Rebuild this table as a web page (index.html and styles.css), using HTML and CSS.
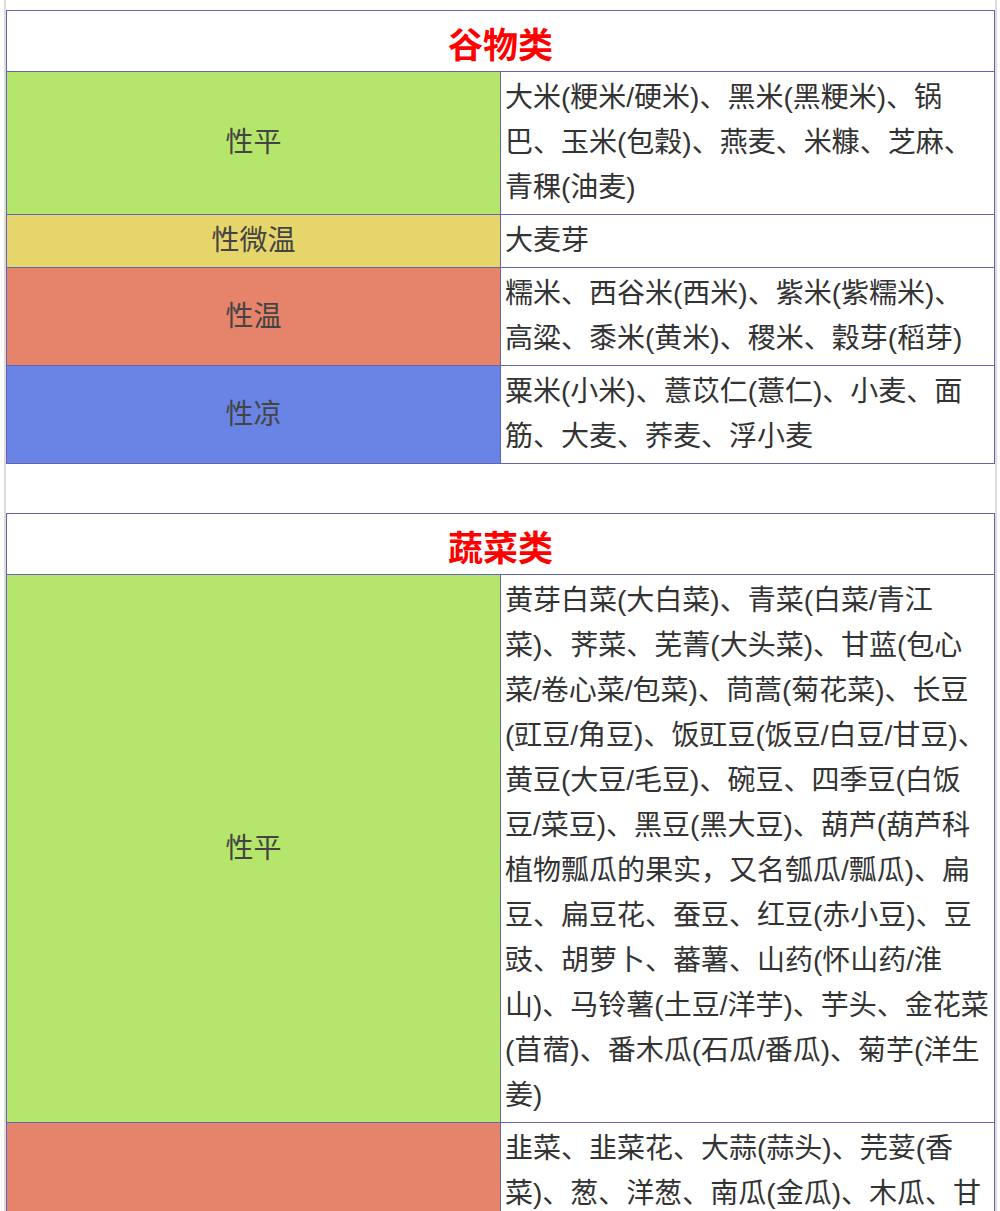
FILE: index.html
```html
<!DOCTYPE html>
<html lang="zh-CN">
<head>
<meta charset="utf-8">
<title>食物性味表</title>
<link rel="stylesheet" href="styles.css">
</head>
<body>
<div class="page">
  <table class="food-table">
    <tr><th colspan="2" class="cat">谷物类</th></tr>
    <tr><td class="nat green">性平</td><td class="items">大米(粳米/硬米)、黑米(黑粳米)、锅巴、玉米(包穀)、燕麦、米糠、芝麻、青稞(油麦)</td></tr>
    <tr><td class="nat yellow">性微温</td><td class="items">大麦芽</td></tr>
    <tr><td class="nat red">性温</td><td class="items">糯米、西谷米(西米)、紫米(紫糯米)、高粱、黍米(黄米)、稷米、穀芽(稻芽)</td></tr>
    <tr><td class="nat blue">性凉</td><td class="items">粟米(小米)、薏苡仁(薏仁)、小麦、面筋、大麦、荞麦、浮小麦</td></tr>
  </table>

  <table class="food-table">
    <tr><th colspan="2" class="cat">蔬菜类</th></tr>
    <tr><td class="nat green">性平</td><td class="items">黄芽白菜(大白菜)、青菜(白菜/青江菜)、荠菜、芜菁(大头菜)、甘蓝(包心菜/卷心菜/包菜)、茼蒿(菊花菜)、长豆(豇豆/角豆)、饭豇豆(饭豆/白豆/甘豆)、黄豆(大豆/毛豆)、碗豆、四季豆(白饭豆/菜豆)、黑豆(黑大豆)、葫芦(葫芦科植物瓢瓜的果实，又名瓠瓜/瓢瓜)、扁豆、扁豆花、蚕豆、红豆(赤小豆)、豆豉、胡萝卜、蕃薯、山药(怀山药/淮山)、马铃薯(土豆/洋芋)、芋头、金花菜(苜蓿)、番木瓜(石瓜/番瓜)、菊芋(洋生姜)</td></tr>
    <tr><td class="nat red">性温</td><td class="items">韭菜、韭菜花、大蒜(蒜头)、芫荽(香菜)、葱、洋葱、南瓜(金瓜)、木瓜、甘蔗、生姜、辣椒、芥菜、香椿、茴香、刀豆、韭黄、蒜苗、蒜苔、芥蓝、雪里蕻(雪菜)、紫苏叶、辣椒叶、薤白、洋芫荽</td></tr>
  </table>
</div>
</body>
</html>
```

FILE: styles.css
```css
html, body {
  margin: 0;
  padding: 0;
  background: #ffffff;
}

body {
  font-family: "Liberation Sans", "Noto Sans CJK SC", sans-serif;
}

.page {
  margin-left: 4px;
  width: 989px;
  border-left: 2px solid #dcdcd8;
  border-right: 2px solid #dcdcd8;
  padding-top: 10px;
  min-height: 1300px;
  box-sizing: content-box;
}

.food-table {
  width: 989px;
  border-collapse: collapse;
  table-layout: fixed;
  margin-bottom: 49px;
  border: 1px solid #6464b4;
}

.food-table td,
.food-table th {
  border: 1px solid #6464b4;
}

.cat {
  background: #ffffff;
  color: #ff0000;
  font-size: 35px;
  font-weight: bold;
  line-height: 45px;
  padding: 12px 0 3px;
  text-align: center;
}

.nat {
  width: 50%;
  text-align: center;
  vertical-align: middle;
  font-size: 28px;
  line-height: 45px;
  color: #444444;
  padding: 3px 4px 4px;
}

.items {
  width: 50%;
  text-align: left;
  vertical-align: top;
  font-size: 28px;
  line-height: 45px;
  color: #333333;
  padding: 3px 5px 4px 4px;
  word-break: break-all;
}

.green { background: #b5e66b; }
.yellow { background: #e6d56a; }
.red { background: #e6836b; }
.blue { background: #6a84e6; }
```
